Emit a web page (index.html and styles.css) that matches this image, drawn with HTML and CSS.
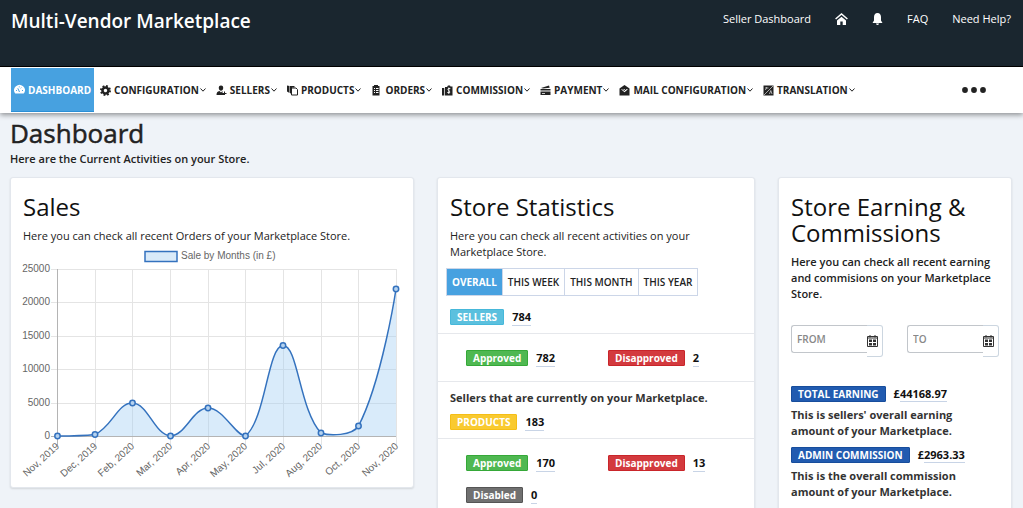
FILE: index.html
```html
<!DOCTYPE html>
<html lang="en">
<head>
<meta charset="utf-8">
<title>Multi-Vendor Marketplace</title>
<link rel="stylesheet" href="styles.css">
</head>
<body>
<svg class="sprite" aria-hidden="true">
  <symbol id="chev" viewBox="0 0 6 6"><path d="M.5 1.500 3 4.200 5.500 1.500" fill="none" stroke="currentColor"/></symbol>
  <symbol id="cal" viewBox="0 0 11 12"><path d="M.5 1.500h10v10H.5zM3 0v2.500M8 0v2.500M.5 3h10" fill="none" stroke="#333"/><path d="M2 4.500h3v2.500H2zM6 4.500h3v2.500H6zM2 8h3v2.500H2zM6 8h3v2.500H6z"/></symbol>
</svg>
<header class="topbar">
  <div class="brand">Multi-Vendor Marketplace</div>
  <nav class="toplinks" aria-label="Account">
    <a href="#">Seller Dashboard</a>
    <a href="#" aria-label="Home"><svg width="13" height="12" viewBox="0 0 13 12"><path d="M.6 6 6.500 1l5.900 5" fill="none" stroke="#fff" stroke-width="1.500"/><path fill="#fff" d="M2 7.500 6.500 3.700 11 7.500V12H7.700V8.500H5.300V12H2z"/></svg></a>
    <a href="#" aria-label="Notifications"><svg width="11" height="12" viewBox="0 0 11 12"><path fill="#fff" d="M5.500 0C7.900 0 9 1.700 9 4v3.500L10.500 10H.5L2 7.500V4C2 1.700 3.100 0 5.500 0zM4 10.500h3Q6.700 12 5.500 12T4 10.500z"/></svg></a>
    <a href="#">FAQ</a>
    <a href="#">Need Help?</a>
  </nav>
</header>
<nav class="menu" aria-label="Main">
  <a class="item active" href="#"><svg class="ico" viewBox="0 0 11 11"><path fill="currentColor" d="M1.300 9.500A5.300 5.300 0 1 1 9.700 9.500z"/><path d="M5.500 8 3.800 4.300M2 6.500h.9M8 6.500h1M7.300 3.600l-.6.7M5.300 2.500v.8" stroke="#47a1e0" fill="none"/></svg>DASHBOARD</a>
  <button class="item"><svg class="ico" viewBox="0 0 11 11"><circle cx="5.500" cy="5.500" r="3" fill="none" stroke="currentColor" stroke-width="2.600"/><circle cx="5.500" cy="5.500" r="4.500" fill="none" stroke="currentColor" stroke-width="2" stroke-dasharray="1.770"/></svg>CONFIGURATION<svg class="chev"><use href="#chev"/></svg></button>
  <button class="item"><svg class="ico" viewBox="0 0 11 11"><path fill="currentColor" d="M5 .5c1.700 0 2.400 1.200 2.200 2.700C7 4.700 6.300 5.700 5 5.700S3 4.700 2.800 3.200C2.600 1.700 3.300.5 5 .5zM.5 10c0-2.500.8-3.300 3-4L5 7.500 6.500 6v2H8V6.500h1V8h1.500v1H9v1z"/></svg>SELLERS<svg class="chev"><use href="#chev"/></svg></button>
  <button class="item"><svg class="ico" viewBox="0 0 11 11"><path fill="currentColor" d="M0 .5 2.500 1v7L0 6.500zM3 1h4.500v1.500H5V9.500L3 8z"/><path d="M4.500 3H9L10.500 4.500V10h-6z" fill="none" stroke="currentColor"/></svg>PRODUCTS<svg class="chev"><use href="#chev"/></svg></button>
  <button class="item"><svg class="ico" viewBox="0 0 11 11"><path fill="currentColor" fill-rule="evenodd" d="M1.500 1H3V0h4v1h1.500v9.500h-7zM3 3v1h1V3zm2 0v1h2.500V3zM3 5v1h1V5zm2 0v1h2.500V5zM3 7v1h1V7zm2 0v1h2.500V7z"/></svg>ORDERS<svg class="chev"><use href="#chev"/></svg></button>
  <button class="item"><svg class="ico" viewBox="0 0 11 11"><path fill="currentColor" d="M0 3h2.300v7.500H0zM3 2h2L6 .5h2L8.500 1.500H10.500V10.500H3z"/><path d="M8.300 3.500H6.400q-1 1.200.3 2t1 2H5.300M6.800 2.500v6.500" fill="none" stroke="#fff" stroke-width=".9"/></svg>COMMISSION<svg class="chev"><use href="#chev"/></svg></button>
  <button class="item"><svg class="ico" viewBox="0 0 11 11"><path fill="currentColor" fill-rule="evenodd" d="M1 3 9 .5l.7 2.300L3 3.500zM.5 4h10v1.500H.500zM.5 6.500h10V10H.500zM2 8v.8h3V8z"/></svg>PAYMENT<svg class="chev"><use href="#chev"/></svg></button>
  <button class="item"><svg class="ico" viewBox="0 0 11 11"><path fill="currentColor" d="M.5 3.500 5.500 0l5 3.500v7H.5z"/><path d="M2 4.300h7L5.500 7.300z" fill="#fff"/><path d="m3.500 4 1.700 1.700L8 3" fill="none" stroke="currentColor"/></svg>MAIL CONFIGURATION<svg class="chev"><use href="#chev"/></svg></button>
  <button class="item"><svg class="ico" viewBox="0 0 11 11"><path fill="currentColor" d="M.5.500h10v10h-10z"/><path d="m1 10 9-9M2 3h3.500M3.700 2q0 2-1.500 3M6.500 9l1.300-3.500L9 9" fill="none" stroke="#ccc" stroke-width=".8"/></svg>TRANSLATION<svg class="chev"><use href="#chev"/></svg></button>
  <button class="more" aria-label="More"><svg width="24" height="6" viewBox="0 0 24 6"><circle cx="3" cy="3" r="2.900"/><circle cx="12" cy="3" r="2.900"/><circle cx="21" cy="3" r="2.900"/></svg></button>
</nav>
<main class="page">
  <h1>Dashboard</h1>
  <p class="lead">Here are the Current Activities on your Store.</p>
  <div class="cards">
    <section class="card sales">
      <h2>Sales</h2>
      <p>Here you can check all recent Orders of your Marketplace Store.</p>
      <svg class="chart" viewBox="23 246 378 232" role="img" aria-label="Sale by Months (in £)">
        <rect x="145" y="251.500" width="32" height="10" class="key"/>
        <text x="181" y="259">Sale by Months (in £)</text>
        <path class="grid" d="M51 269.500H396M51 302.500H396M51 336.500H396M51 369.500H396M51 403.500H396M95.500 269V445M132.500 269V445M170.500 269V445M208.500 269V445M245.500 269V445M283.500 269V445M321.500 269V445M358.500 269V445M396.500 269V445"/>
        <path class="axis" d="M57.500 269V445M51 436.500H396"/>
        <path class="area" d="M57.500 436C57.500 436 82 436 95 434.500C112 427 117.600 402.700 132.500 403C147.800 403.300 154.900 435 170.500 436C185 436 193 408 208 408C223 408 235.800 436 245.500 436C265.800 419 267.700 346.100 283 345.500C297.900 344.900 299.400 410 321 433C329.600 436 352.100 436 358.500 426C382.100 380.600 396 289 396 289V436z"/>
        <path class="line" d="M57.500 436C57.500 436 82 436 95 434.500C112 427 117.600 402.700 132.500 403C147.800 403.300 154.900 435 170.500 436C185 436 193 408 208 408C223 408 235.800 436 245.500 436C265.800 419 267.700 346.100 283 345.500C297.900 344.900 299.400 410 321 433C329.600 436 352.100 436 358.500 426C382.100 380.600 396 289 396 289"/>
        <g class="dots"><circle cx="57.500" cy="436" r="2.700"/><circle cx="95" cy="434.500" r="2.700"/><circle cx="132.500" cy="403" r="2.700"/><circle cx="170.500" cy="436" r="2.700"/><circle cx="208" cy="408" r="2.700"/><circle cx="245.500" cy="436" r="2.700"/><circle cx="283" cy="345.500" r="2.700"/><circle cx="321" cy="433" r="2.700"/><circle cx="358.500" cy="426" r="2.700"/><circle cx="396" cy="289" r="2.700"/></g>
        <g text-anchor="end"><text x="50" y="272">25000</text><text x="50" y="305">20000</text><text x="50" y="339">15000</text><text x="50" y="372">10000</text><text x="50" y="406">5000</text><text x="50" y="439">0</text>
        <text transform="translate(60 447) rotate(-42)">Nov, 2019</text><text transform="translate(98 447) rotate(-42)">Dec, 2019</text><text transform="translate(135 447) rotate(-42)">Feb, 2020</text><text transform="translate(173 447) rotate(-42)">Mar, 2020</text><text transform="translate(211 447) rotate(-42)">Apr, 2020</text><text transform="translate(248 447) rotate(-42)">May, 2020</text><text transform="translate(286 447) rotate(-42)">Jul, 2020</text><text transform="translate(323 447) rotate(-42)">Aug, 2020</text><text transform="translate(361 447) rotate(-42)">Oct, 2020</text><text transform="translate(399 447) rotate(-42)">Nov, 2020</text></g>
      </svg>
    </section>
    <section class="card stats">
      <h2>Store Statistics</h2>
      <p>Here you can check all recent activities on your Marketplace Store.</p>
      <div class="tabs"><button class="on">OVERALL</button><button>THIS WEEK</button><button>THIS MONTH</button><button>THIS YEAR</button></div>
      <div class="row"><span class="tag cyan">SELLERS</span><a class="num" href="#">784</a></div>
      <div class="breakdown">
        <div class="row"><span class="tag green">Approved</span><a class="num" href="#">782</a></div>
        <div class="row"><span class="tag red">Disapproved</span><a class="num" href="#">2</a></div>
      </div>
      <p class="note">Sellers that are currently on your Marketplace.</p>
      <div class="row"><span class="tag yellow">PRODUCTS</span><a class="num" href="#">183</a></div>
      <div class="breakdown">
        <div class="row"><span class="tag green">Approved</span><a class="num" href="#">170</a></div>
        <div class="row"><span class="tag red">Disapproved</span><a class="num" href="#">13</a></div>
        <div class="row"><span class="tag gray">Disabled</span><a class="num" href="#">0</a></div>
      </div>
    </section>
    <section class="card earning">
      <h2>Store Earning &amp; Commissions</h2>
      <p class="strong">Here you can check all recent earning and commisions on your Marketplace Store.</p>
      <div class="dates">
        <div class="date"><input type="text" placeholder="FROM" aria-label="From"><button aria-label="Pick start date"><svg width="11" height="12"><use href="#cal"/></svg></button></div>
        <div class="date"><input type="text" placeholder="TO" aria-label="To"><button aria-label="Pick end date"><svg width="11" height="12"><use href="#cal"/></svg></button></div>
      </div>
      <div class="row"><span class="tag blue">TOTAL EARNING</span><span class="money">£<a class="num" href="#">44168.97</a></span></div>
      <p class="note">This is sellers' overall earning amount of your Marketplace.</p>
      <div class="row"><span class="tag blue">ADMIN COMMISSION</span><span class="money">£<a class="num" href="#">2963.33</a></span></div>
      <p class="note">This is the overall commission amount of your Marketplace.</p>
    </section>
  </div>
</main>
</body>
</html>
```
FILE: styles.css
```css
* { box-sizing: border-box; }
body { margin: 0; background: #eff3f8; color: #222; font: 11px/16px "Open Sans", "Noto Sans", sans-serif; overflow: hidden; height: 100vh; }
a { color: inherit; text-decoration: none; }
button { font: inherit; color: inherit; background: none; border: 0; padding: 0; }
h1, h2, p { margin: 0; }
.sprite { display: none; }

.topbar { display: flex; justify-content: space-between; height: 67px; padding: 8px 12px 8px 11px; background: #1a262f; border-bottom: 1px solid #000; color: #fff; }
.brand { font-size: 19px; line-height: 26px; font-weight: 600; }
.toplinks { display: flex; gap: 24px; height: 22px; align-items: center; }
.toplinks svg { display: block; }

.menu { position: relative; display: flex; align-items: center; height: 46px; padding: 0 37px 0 11px; background: #fff; box-shadow: 0 2px 5px rgba(0,0,0,.4); font-size: 10px; font-weight: 700; }
.item { display: flex; align-items: center; height: 44px; margin-right: 10px; white-space: nowrap; }
.item .ico { width: 11px; height: 11px; margin-right: 3px; }
.chev { width: 6px; height: 6px; margin-left: 1px; }
.active { margin-right: 6px; padding: 0 3px; background: #47a1e0; color: #fff; border-bottom: 1px solid #2b8fd6; }
.more { margin-left: auto; }
.more svg { display: block; fill: #222; }

.page { padding: 4px 11px 20px 10px; }
h1 { font-size: 26px; line-height: 32px; font-weight: 500; -webkit-text-stroke: 0.5px currentColor; }
.lead { font-weight: 600; margin-top: 2px; }
.cards { display: grid; grid-template-columns: minmax(0, 404fr) minmax(0, 318fr) minmax(0, 234fr); gap: 23px; margin-top: 10px; align-items: start; }
.card { background: #fff; border: 1px solid #e3e7ed; border-radius: 3px; box-shadow: 0 1px 2px rgba(0,0,0,.12); padding: 16px 12px 8px; min-height: 311px; }
h2 { font-size: 24px; line-height: 26px; font-weight: 400; color: #111; }
.card h2 + p { margin-top: 8px; }
.sales { padding-bottom: 0; }
.chart { display: block; width: 100%; margin-top: 2px; overflow: visible; }
.chart text { font: 10px "Liberation Sans", Arial, sans-serif; fill: #666; }
.grid, .axis, .line { fill: none; }
.grid { stroke: #e4e4e4; }
.axis { stroke: #b4b4b4; }
.area { fill: rgba(160,205,242,.4); }
.line { stroke: #3472be; stroke-width: 1.5; }
.key { fill: #d9eaf9; stroke: #3472be; stroke-width: 1.5; }
.dots { fill: #b5d2ef; stroke: #3472be; stroke-width: 1.5; }

.tabs { display: flex; width: max-content; margin: 8px 0 13px -4px; border: 1px solid #ccd6e8; font-size: 10px; font-weight: 600; }
.tabs button { height: 26px; padding: 0 5px; border-left: 1px solid #ccd6e8; }
.tabs .on { background: #47a1e0; color: #fff; border-left: 0; font-weight: 700; }
.row { display: flex; align-items: center; gap: 8px; height: 16px; }
.tag { height: 16px; padding: 0 6px; border-radius: 1px; border: 1px solid; color: #fff; font-size: 10px; line-height: 15px; font-weight: 700; white-space: nowrap; }
.cyan { background: #5bc0de; border-color: #46b8da; }
.green { background: #4fb851; border-color: #35a838; }
.red { background: #d33a3e; border-color: #c9252a; }
.yellow { background: #f9ca30; border-color: #f5be16; }
.gray { background: #707070; border-color: #555; }
.blue { background: #215bb0; border-color: #174d9c; }
.num { border-bottom: 1px solid #c8d4e6; color: #111; font-weight: 700; }
.money { font-weight: 700; color: #111; }
.note { color: #333; font-weight: 700; }
.breakdown { display: grid; grid-template-columns: 1fr 1fr; row-gap: 16px; margin: 8px -12px 8px; padding: 16px 4px 15px 28px; border: solid #e6e8ec; border-width: 1px 0; }
.stats .note { margin-bottom: 8px; }
.strong { font-weight: 600; }
.dates { display: flex; gap: 24px; margin: 23px 0 29px; }
.date { display: flex; flex: 1; min-width: 0; align-items: flex-start; }
.date input { flex: 1; min-width: 0; height: 28px; border: 1px solid #c2c6cb; border-right: 0; border-radius: 3px 0 0 3px; padding: 0 5px; font: 600 10px "Open Sans", sans-serif; }
.date input::placeholder { color: #888; }
.date button { display: flex; align-items: center; justify-content: flex-start; width: 16px; height: 32px; border: 1px solid #ccd6e0; border-left: 0; border-radius: 0 3px 3px 0; }
.date svg { fill: #333; }
.earning .note { margin: 5px 0 8px; padding-right: 12px; }
```
